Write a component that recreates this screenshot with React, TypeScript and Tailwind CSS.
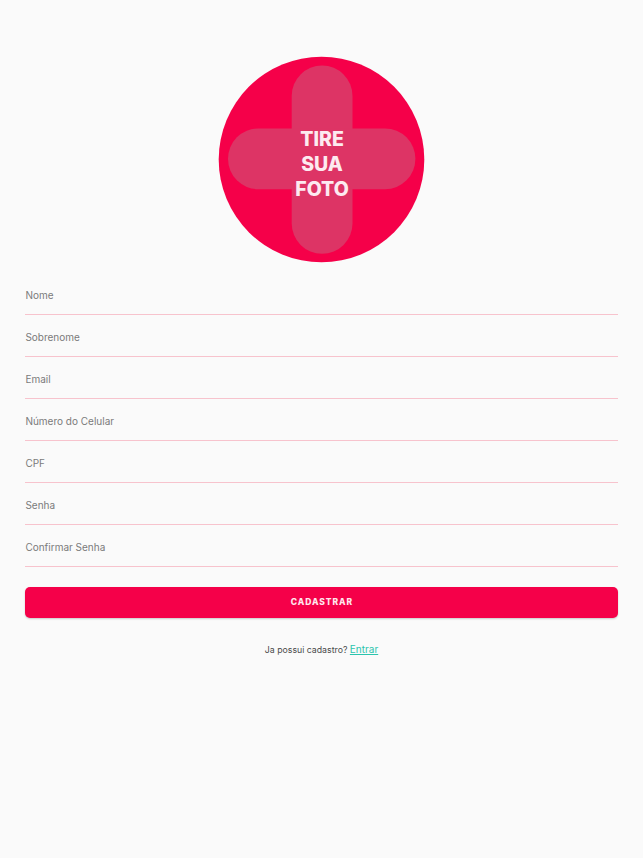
import React, { useState } from "react";

const fields = [
  { name: "nome", label: "Nome", type: "text" },
  { name: "sobrenome", label: "Sobrenome", type: "text" },
  { name: "email", label: "Email", type: "email" },
  { name: "celular", label: "Número do Celular", type: "tel" },
  { name: "cpf", label: "CPF", type: "text" },
  { name: "senha", label: "Senha", type: "password" },
  { name: "confirmarSenha", label: "Confirmar Senha", type: "password" },
];

const PhotoButton: React.FC = () => (
  <button type="button" className="block h-[207px] w-[207px] cursor-pointer">
    <svg viewBox="0 0 207 207" className="h-full w-full">
      <circle cx="103.5" cy="103.5" r="102.8" fill="#f50049" />
      {/* Cross */}
      <g fill="#dd3465">
        <rect x="73.7" y="9.5" width="60.8" height="188.3" rx="30.4" />
        <rect x="10" y="72.4" width="187.4" height="60.8" rx="30.4" />
      </g>
      <g
        fill="#fdeaf0"
        textAnchor="middle"
        className="font-['Inter',sans-serif] text-[19.5px] font-extrabold"
      >
        <text x="104" y="90.2">TIRE</text>
        <text x="104" y="115.2">SUA</text>
        <text x="104" y="140.2">FOTO</text>
      </g>
    </svg>
  </button>
);

const App: React.FC = () => {
  const [values, setValues] = useState<Record<string, string>>({});

  return (
    <div className="flex min-h-screen flex-col items-center bg-[#fafafa] px-[25px] pt-[56px] font-['Inter',sans-serif]">
      <PhotoButton />

      {/* Form */}
      <form className="mt-[10px] w-full px-[0.4px]" onSubmit={(e) => e.preventDefault()}>
        {fields.map((field) => (
          <input
            key={field.name}
            type={field.type}
            placeholder={field.label}
            value={values[field.name] || ""}
            onChange={(e) => setValues({ ...values, [field.name]: e.target.value })}
            className="block h-[42px] w-full border-b border-[#f7c3cd] pt-[3px] text-[10px] text-gray-700 outline-none placeholder:text-[#7b7b7b]"
          />
        ))}

        <button
          type="submit"
          className="mt-5 flex h-[31px] w-full cursor-pointer items-center justify-center rounded-[5px] bg-[#f50049] pl-px text-[8.5px] font-extrabold tracking-[0.11em] text-[#ffe6ed] shadow-[0_1px_2px_rgba(0,0,0,0.2)]"
        >
          CADASTRAR
        </button>
      </form>

      <p className="mt-[23px] text-[8.75px] leading-4 text-[#4a4a4a]">
        Ja possui cadastro?{" "}
        <a href="#" className="text-[10px] text-[#2bc4ad] underline">
          Entrar
        </a>
      </p>
    </div>
  );
};

export default App;
